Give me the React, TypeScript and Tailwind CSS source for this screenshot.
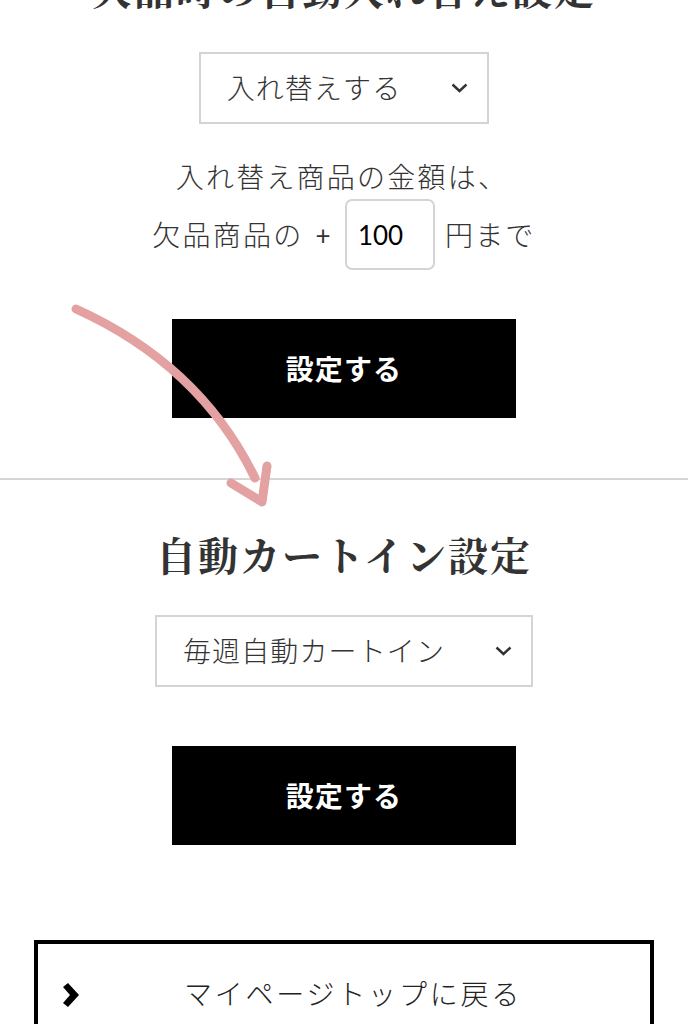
const bodyFont = "font-['Lato','Noto_Sans_CJK_JP',sans-serif]";

const Chevron = () => (
  <svg width="17" height="10" viewBox="0 0 17 10" className="shrink-0">
    <path d="M1.5 1.5 L8.5 8 L15.5 1.5" fill="none" stroke="#333" strokeWidth="2.4" />
  </svg>
);

const SelectBox = ({ label }: { label: string }) => (
  <div className="flex h-[72px] items-center border-2 border-[#d4d4d4] pl-[26px] pr-[19px] bg-white">
    <span className="text-[28px] font-light tracking-[0.04em] text-[#333] leading-none">{label}</span>
    <span className="ml-[50px]">
      <Chevron />
    </span>
  </div>
);

const SubmitButton = ({ className }: { className?: string }) => (
  <button
    className={`flex h-[99px] w-[344px] items-center justify-center bg-black text-[28px] font-bold tracking-[0.04em] text-white ${className ?? ""}`}
  >
    設定する
  </button>
);

const Heading = ({ children, className }: { children: string; className?: string }) => (
  <h2
    className={`h-[48px] text-center text-[40px] leading-[48px] font-bold tracking-[2px] text-[#333] font-['Noto_Serif_CJK_JP','Noto_Serif_JP','Liberation_Serif','Noto_Sans_CJK_JP',serif] ${className ?? ""}`}
  >
    {children}
  </h2>
);

export default function App() {
  return (
    <div className={`relative h-[1024px] w-full overflow-hidden bg-white ${bodyFont}`}>
      <div className="flex flex-col items-center">
        <Heading className="mt-[-36px]">欠品時の自動入れ替え設定</Heading>
        <div className="mt-[40px]">
          <SelectBox label="入れ替えする" />
        </div>

        <div className="mt-[31px] flex flex-col items-center text-[28px] font-light tracking-[0.08em] text-[#333]">
          <p className="flex h-[44px] items-center leading-none pr-[4px]">入れ替え商品の金額は、</p>
          <div className="flex h-[71px] items-center">
            <span className="leading-none">欠品商品の</span>
            <span className="ml-[12px] leading-none text-[26px] font-normal">+</span>
            <input
              readOnly
              value="100"
              className="ml-[12px] h-[71px] w-[90px] rounded-[7px] border-2 border-[#d4d4d4] pl-[11px] text-[26px] font-normal tracking-normal text-black outline-none"
            />
            <span className="ml-[10px] leading-none">円まで</span>
          </div>
        </div>

        <SubmitButton className="mt-[49px]" />
      </div>

      <div className="mt-[60px] h-[2px] w-full bg-[#d6d6d6]" />

      <div className="flex flex-col items-center">
        <Heading className="mt-[50px]">自動カートイン設定</Heading>
        <div className="mt-[37px]">
          <SelectBox label="毎週自動カートイン" />
        </div>
        <SubmitButton className="mt-[59px]" />
      </div>

      <div className="mx-[34px] mt-[95px] flex h-[110px] items-start border-[4px] border-black">
        <div className="flex h-[100px] w-full items-center px-6">
          <svg width="18" height="24" viewBox="0 0 18 24" className="shrink-0 mt-[2px]">
            <polygon points="1,4 6,0 17,12 6,24 1,20 8,12" fill="#000" />
          </svg>
          <span className="flex-1 text-center text-[28px] font-light tracking-[0.1em] text-[#222] leading-none">
            マイページトップに戻る
          </span>
        </div>
      </div>

      <svg
        className="pointer-events-none absolute left-0 top-0"
        width="688"
        height="1024"
        viewBox="0 0 688 1024"
      >
        <g fill="none" stroke="#e3a1a2" strokeWidth="9" strokeLinecap="round" strokeLinejoin="round">
          <path d="M76 309 Q 200 365 255 478" />
          <path d="M267 466 L262 502 L231 483" />
        </g>
      </svg>
    </div>
  );
}
